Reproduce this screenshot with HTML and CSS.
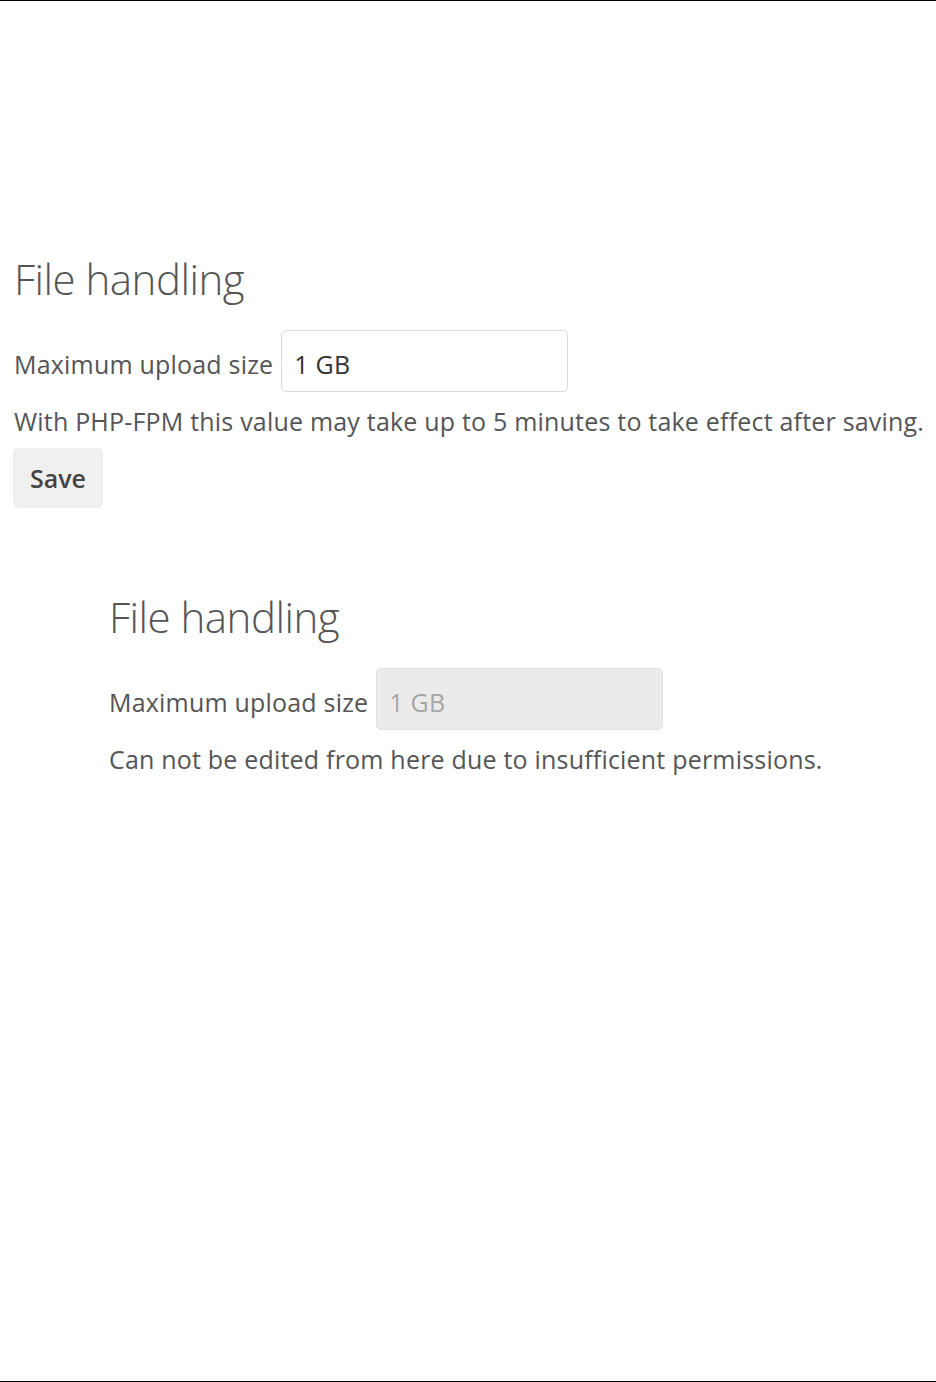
FILE: index.html
```html
<!DOCTYPE html>
<html lang="en">
<head>
    <meta charset="UTF-8">
    <meta name="viewport" content="width=device-width, initial-scale=1.0">
    <title>File handling</title>
    <link rel="stylesheet" href="styles.css">
</head>
<body>

    <div class="page">

        <!-- Administrador com permissão de escrita -->
        <div class="section">
            <h2>File handling</h2>
            <div class="field">
                <label for="maxUpload">Maximum upload size</label>
                <input type="text" id="maxUpload" value="1 GB">
            </div>
            <p class="hint">With PHP-FPM this value may take up to 5 minutes to take effect after saving.</p>
            <button class="save-button">Save</button>
        </div>

        <!-- Sem permissão: campo desabilitado -->
        <div class="section section-readonly">
            <h2>File handling</h2>
            <div class="field">
                <label for="maxUploadRo">Maximum upload size</label>
                <input type="text" id="maxUploadRo" value="1 GB" disabled>
            </div>
            <p class="hint">Can not be edited from here due to insufficient permissions.</p>
        </div>

    </div>

</body>
</html>
```

FILE: styles.css
```css
* {
    box-sizing: border-box;
    margin: 0;
    padding: 0;
}

body {
    font-family: "Open Sans", "Liberation Sans", sans-serif;
    font-size: 25px;
    letter-spacing: 0.2px;
    color: #555;
    background-color: #fff;
}

.page {
    height: 1382px;
    border-top: 1px solid #000;
    border-bottom: 1px solid #000;
    padding-top: 252px;
}

.section {
    padding-left: 14px;
}

.section-readonly {
    padding-left: 109px;
    margin-top: 83px;
}

h2 {
    font-size: 42px;
    font-weight: 300;
    line-height: 52px;
    letter-spacing: -0.5px;
    color: #555;
}

/* Linha com rótulo e campo */
.field {
    display: flex;
    align-items: flex-start;
    gap: 8px;
    margin-top: 25px;
}

.field label {
    line-height: 30px;
    padding-top: 19px;
}

.field input {
    font-family: inherit;
    font-size: 25px;
    letter-spacing: 0.2px;
    color: #333;
    width: 287px;
    height: 62px;
    padding: 6px 12px 0;
    border: 1px solid #dbdbdb;
    border-radius: 5px;
    background-color: #fff;
    outline: none;
}

.field input:disabled {
    background-color: #ebebeb;
    border-color: #e0e0e0;
    color: #a6a6a6;
}

.hint {
    line-height: 30px;
    margin-top: 14px;
}

.save-button {
    font-family: inherit;
    font-size: 25px;
    font-weight: 600;
    color: #444;
    background-color: #f0f0f0;
    border: 1px solid #ededed;
    border-radius: 5px;
    height: 60px;
    padding: 0 16px;
    margin-top: 12px;
    margin-left: -1px;
    cursor: pointer;
}
```
